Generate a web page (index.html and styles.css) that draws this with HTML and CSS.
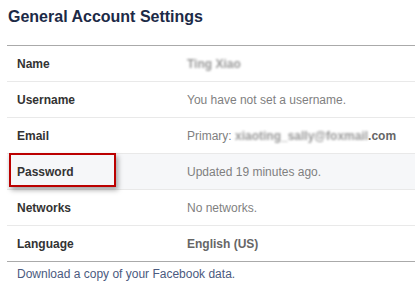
FILE: index.html
```html
<!DOCTYPE html>
<html>
<head>
<meta charset="utf-8">
<link rel="stylesheet" href="styles.css">
</head>
<body>
<div class="page">
  <h1 class="title">General Account Settings</h1>
  <div class="settings">
    <div class="row">
      <div class="label">Name</div>
      <div class="value"><span class="blur">Ting Xiao</span></div>
    </div>
    <div class="row">
      <div class="label">Username</div>
      <div class="value">You have not set a username.</div>
    </div>
    <div class="row">
      <div class="label">Email</div>
      <div class="value">Primary: <strong class="strong"><span class="blur">xiaoting_sally@foxmail</span>.com</strong></div>
    </div>
    <div class="row row-active">
      <div class="label">Password</div>
      <div class="value">Updated 19 minutes ago.</div>
      <div class="highlight"></div>
    </div>
    <div class="row">
      <div class="label">Networks</div>
      <div class="value">No networks.</div>
    </div>
    <div class="row row-last">
      <div class="label">Language</div>
      <div class="value"><strong class="strong">English (US)</strong></div>
    </div>
  </div>
  <a class="download" href="#">Download a copy of your Facebook data.</a>
</div>
</body>
</html>
```

FILE: styles.css
```css
html, body {
  margin: 0;
  padding: 0;
  background: #ffffff;
}

.page {
  font-family: "Liberation Sans", Arial, sans-serif;
  font-size: 12px;
  padding: 7px 0 0 7px;
}

.title {
  margin: 0 0 0 1px;
  font-size: 16px;
  line-height: 20px;
  font-weight: bold;
  color: #1c2a47;
  height: 38px;
}

.settings {
  border-top: 1px solid #aaaaaa;
}

.row {
  position: relative;
  display: grid;
  grid-template-columns: 180px 1fr;
  align-items: center;
  height: 35px;
  border-bottom: 1px solid #e9e9e9;
}

.row-active {
  background: #f6f7f9;
}

.row-last {
  border-bottom-color: #aaaaaa;
}

.label {
  padding-left: 10px;
  font-weight: bold;
  color: #333333;
}

.value {
  color: #7f7f7f;
  white-space: nowrap;
}

.strong {
  font-weight: bold;
  color: #666666;
}

.blur {
  filter: blur(1.2px);
  color: #999999;
  font-weight: bold;
}

.highlight {
  position: absolute;
  left: 2px;
  top: -1px;
  width: 103px;
  height: 30px;
  border: 2px solid #bb0000;
  box-shadow: 2px 3px 5px rgba(0, 0, 0, 0.35);
}

.download {
  display: block;
  padding: 5px 0 0 10px;
  line-height: 14px;
  color: #4b5a80;
  text-decoration: none;
}
```
